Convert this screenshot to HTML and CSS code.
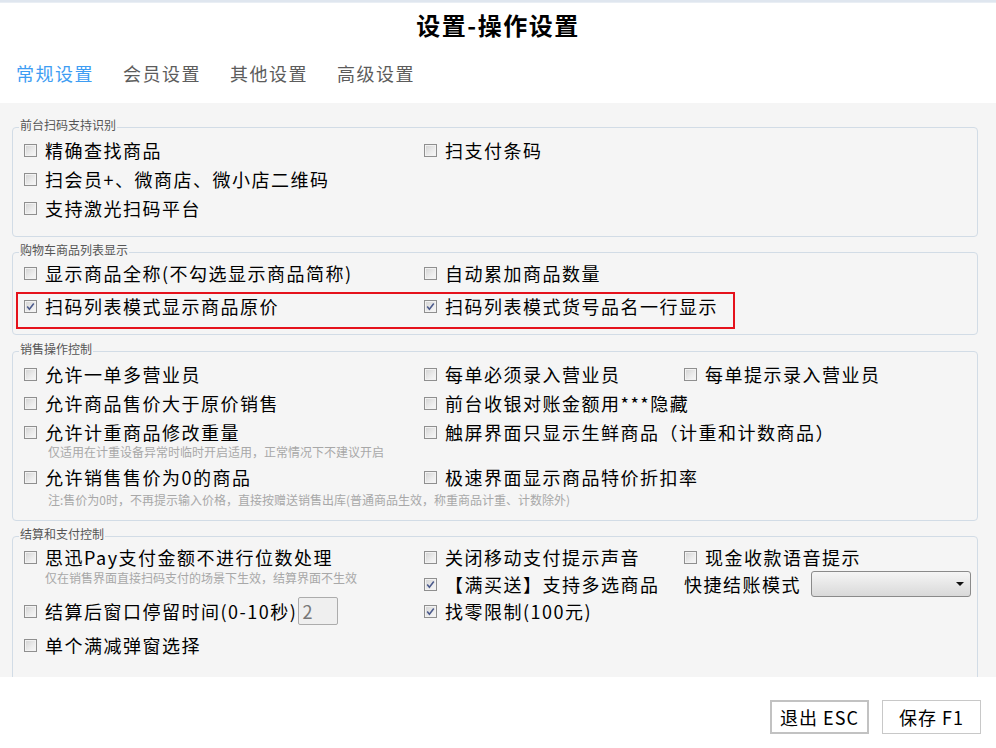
FILE: index.html
```html
<!DOCTYPE html>
<html lang="zh-CN">
<head>
<meta charset="utf-8">
<title>设置-操作设置</title>
<link rel="stylesheet" href="styles.css">
</head>
<body>
<div class="topstrip"></div>
<header class="head">
  <h1 class="title">设置-操作设置</h1>
  <nav class="tabs">
    <span class="tab active">常规设置</span>
    <span class="tab">会员设置</span>
    <span class="tab">其他设置</span>
    <span class="tab">高级设置</span>
  </nav>
</header>
<main class="panel">
  <fieldset class="grp g1">
    <legend>前台扫码支持识别</legend>
    <div class="grid2">
      <label class="cb"><span class="box"></span>精确查找商品</label>
      <label class="cb"><span class="box"></span>扫支付条码</label>
      <label class="cb c1"><span class="box"></span>扫会员+、微商店、微小店二维码</label>
      <label class="cb c1"><span class="box"></span>支持激光扫码平台</label>
    </div>
  </fieldset>

  <fieldset class="grp g2">
    <legend>购物车商品列表显示</legend>
    <div class="grid2">
      <label class="cb"><span class="box"></span>显示商品全称(不勾选显示商品简称)</label>
      <label class="cb"><span class="box"></span>自动累加商品数量</label>
    </div>
    <div class="hl grid2">
      <label class="cb"><span class="box on"><svg viewBox="0 0 11 11" width="11" height="11"><polyline points="2.2,5.6 4.4,8.2 8.8,2.6" fill="none" stroke="#4c5b8c" stroke-width="1.6"/></svg></span>扫码列表模式显示商品原价</label>
      <label class="cb"><span class="box on"><svg viewBox="0 0 11 11" width="11" height="11"><polyline points="2.2,5.6 4.4,8.2 8.8,2.6" fill="none" stroke="#4c5b8c" stroke-width="1.6"/></svg></span>扫码列表模式货号品名一行显示</label>
    </div>
  </fieldset>

  <fieldset class="grp g3">
    <legend>销售操作控制</legend>
    <div class="grid3">
      <label class="cb"><span class="box"></span>允许一单多营业员</label>
      <label class="cb"><span class="box"></span>每单必须录入营业员</label>
      <label class="cb"><span class="box"></span>每单提示录入营业员</label>

      <label class="cb"><span class="box"></span>允许商品售价大于原价销售</label>
      <label class="cb"><span class="box"></span>前台收银对账金额用***隐藏</label>

      <div class="cell c1">
        <label class="cb"><span class="box"></span>允许计重商品修改重量</label>
        <p class="hint ind">仅适用在计重设备异常时临时开启适用，正常情况下不建议开启</p>
      </div>
      <label class="cb"><span class="box"></span>触屏界面只显示生鲜商品（计重和计数商品）</label>

      <div class="cell c1">
        <label class="cb"><span class="box"></span>允许销售售价为0的商品</label>
        <p class="hint ind note">注:售价为0时，不再提示输入价格，直接按赠送销售出库(普通商品生效，称重商品计重、计数除外)</p>
      </div>
      <label class="cb"><span class="box"></span>极速界面显示商品特价折扣率</label>
    </div>
  </fieldset>

  <fieldset class="grp g4">
    <legend>结算和支付控制</legend>
    <div class="cols">
      <div class="col-l">
        <label class="cb"><span class="box"></span>思迅Pay支付金额不进行位数处理</label>
        <p class="hint h4">仅在销售界面直接扫码支付的场景下生效，结算界面不生效</p>
        <label class="cb tall"><span class="box"></span>结算后窗口停留时间(0-10秒)<span class="num">2</span></label>
        <label class="cb last"><span class="box"></span>单个满减弹窗选择</label>
      </div>
      <div class="col-r">
        <label class="cb"><span class="box"></span>关闭移动支付提示声音</label>
        <label class="cb"><span class="box"></span>现金收款语音提示</label>
        <label class="cb"><span class="box on"><svg viewBox="0 0 11 11" width="11" height="11"><polyline points="2.2,5.6 4.4,8.2 8.8,2.6" fill="none" stroke="#4c5b8c" stroke-width="1.6"/></svg></span>【满买送】支持多选商品</label>
        <div class="cb">快捷结账模式<span class="sel"><span class="caret"></span></span></div>
        <label class="cb"><span class="box on"><svg viewBox="0 0 11 11" width="11" height="11"><polyline points="2.2,5.6 4.4,8.2 8.8,2.6" fill="none" stroke="#4c5b8c" stroke-width="1.6"/></svg></span>找零限制(100元)</label>
      </div>
    </div>
  </fieldset>
</main>
<footer class="foot">
  <button class="btn btn-esc">退出 ESC</button>
  <button class="btn">保存 F1</button>
</footer>
</body>
</html>
```
FILE: styles.css
```css
* { box-sizing: border-box; }
html, body { margin: 0; padding: 0; }
body {
  width: 996px;
  height: 748px;
  overflow: hidden;
  background: #fff;
  color: #000;
  font-family: "Noto Sans CJK SC", "Noto Sans", sans-serif;
}
.topstrip {
  height: 3px;
  background: #dfe6ef;
  border-bottom: 1px solid #e9eef4;
}
.head {
  height: 100px;
  display: flex;
  flex-direction: column;
}
.title {
  margin: 5px 0 0;
  text-align: center;
  font-size: 24px;
  line-height: 34px;
  font-weight: 700;
  letter-spacing: 1.5px;
}
.tabs {
  display: flex;
  gap: 29px;
  padding-left: 16px;
  margin-top: 19px;
}
.tab {
  font-size: 18px;
  line-height: 24px;
  letter-spacing: 1.5px;
  color: #5c5c5c;
}
.tab.active { color: #3e9df3; }

.panel {
  height: 574px;
  background: #f5f5f5;
  overflow: hidden;
  padding-top: 14px;
}
.grp {
  margin: 0 18px 5px 12px;
  padding: 0 11px 15px;
  border: 1px solid #d2dce6;
  border-radius: 4px;
  min-width: 0;
}
.grp legend {
  font-size: 12px;
  line-height: 16px;
  padding: 0 1px 4px;
  margin-left: -5px;
  color: #555;
}
.g1 { padding-top: 2px; padding-bottom: 17px; }
.g2 { padding-top: 0; padding-bottom: 5px; margin-bottom: 6px; }
.g3 { padding-top: 2px; padding-bottom: 13px; }
.g4 { padding-top: 0; padding-bottom: 40px; }

.grid2 {
  display: grid;
  grid-template-columns: 400px 1fr;
  row-gap: 7px;
}
.grid3 {
  display: grid;
  grid-template-columns: 400px 260px 1fr;
  row-gap: 7px;
  align-items: start;
}
.c1 { grid-column: 1; }

.cb {
  display: flex;
  align-items: center;
  height: 22px;
  font-size: 18px;
  letter-spacing: 1.5px;
  white-space: nowrap;
}
.box {
  flex: 0 0 13px;
  width: 13px;
  height: 13px;
  margin-right: 8px;
  border: 1px solid #8f8f8f;
  background: linear-gradient(135deg, #d2d2d2 0%, #ececec 60%, #f8f8f8 100%);
  box-shadow: inset 0 0 0 1px #f2f2f2;
  display: flex;
  align-items: center;
  justify-content: center;
}
.box svg { display: block; }

.hl {
  width: 719px;
  margin: 8px 0 0 -8px;
  padding: 1px 6px 10px;
  border: 2px solid #e5121c;
}

.hint {
  margin: 2px 0 0;
  font-size: 12px;
  line-height: 14px;
  color: #a8a8a8;
  white-space: nowrap;
}
.ind { padding-left: 24px; }
.note { margin-top: 5px; }

.cols { display: flex; }
.col-l {
  flex: 0 0 400px;
  width: 400px;
  display: flex;
  flex-direction: column;
}
.h4 { margin-top: 3px; padding-left: 21px; }
.tall { height: 28px; margin-top: 12px; }
.last { margin-top: 9px; }
.num {
  width: 40px;
  height: 28px;
  margin-left: 1px;
  border: 1px solid #acacac;
  border-radius: 2px;
  background: #efefef;
  color: #777;
  font-size: 18px;
  line-height: 26px;
  padding-left: 3px;
  letter-spacing: 0;
}
.col-r {
  display: grid;
  grid-template-columns: 260px auto;
  grid-template-rows: 22px 26px 22px;
  row-gap: 3px;
  align-items: center;
}
.col-r .cb { height: 22px; }
.sel {
  width: 160px;
  height: 26px;
  margin-left: 10px;
  border: 1px solid #8a8a8a;
  border-radius: 3px;
  background: linear-gradient(#f5f5f5, #d9d9d9);
  display: flex;
  align-items: center;
  justify-content: flex-end;
  padding-right: 6px;
}
.caret {
  width: 0;
  height: 0;
  border-left: 4px solid transparent;
  border-right: 4px solid transparent;
  border-top: 4px solid #111;
}

.foot {
  display: flex;
  justify-content: flex-end;
  gap: 13px;
  padding: 23px 15px 0;
}
.btn {
  width: 99px;
  height: 34px;
  background: #fff;
  border: 1px solid #c8c8c8;
  font-family: "Noto Sans CJK SC", "Noto Sans", sans-serif;
  font-size: 18px;
  letter-spacing: 1px;
  color: #000;
  padding: 0;
}
.btn-esc { border: 2px solid #c2c2c2; }
```
